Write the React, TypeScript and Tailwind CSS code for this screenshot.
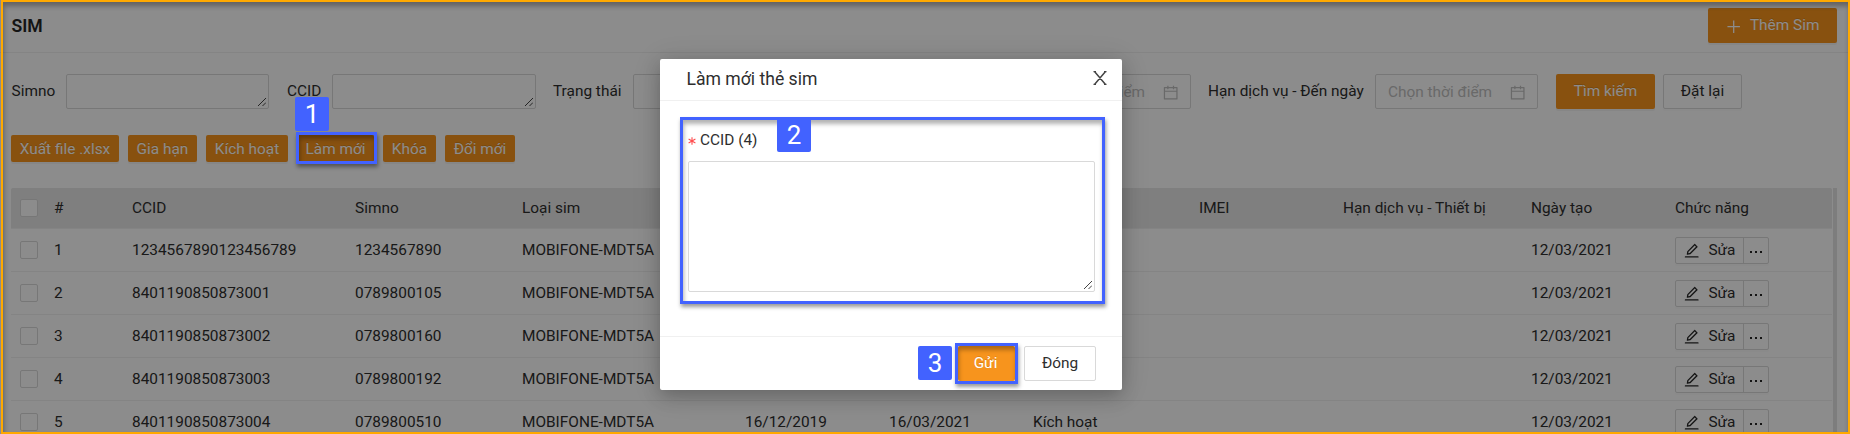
import React from "react";

const text = "whitespace-nowrap text-[15.4px] leading-[24.2px] text-[#2e2e2e]";

function Grip() {
  return (
    <svg className="absolute right-[2px] bottom-[2px] h-[8px] w-[8px]" viewBox="0 0 8 8" fill="none" stroke="#444" strokeWidth="1">
      <path d="M0 8 8 0M4.500 8 8 4.500" />
    </svg>
  );
}

function CalendarIcon() {
  return (
    <svg className="mt-[2px] h-[15.4px] w-[15.4px]" viewBox="64 64 896 896" fill="#bfbfbf">
      <path d="M880 184H712v-64c0-4.400-3.600-8-8-8h-56c-4.400 0-8 3.600-8 8v64H384v-64c0-4.400-3.600-8-8-8h-56c-4.400 0-8 3.600-8 8v64H144c-17.700 0-32 14.300-32 32v664c0 17.700 14.300 32 32 32h736c17.700 0 32-14.300 32-32V216c0-17.700-14.300-32-32-32zm-40 656H184V460h656v380zM184 392V256h128v48c0 4.400 3.600 8 8 8h56c4.400 0 8-3.600 8-8v-48h256v48c0 4.400 3.600 8 8 8h56c4.400 0 8-3.600 8-8v-48h128v136H184z" />
    </svg>
  );
}

function EditIcon() {
  return (
    <svg className="mt-[2px] h-[15.4px] w-[15.4px] shrink-0" viewBox="64 64 896 896" fill="#262626">
      <path d="M257.700 752c2 0 4-.2 6-.5L431.900 722c2-.4 3.900-1.300 5.300-2.800l423.900-423.900a9.960 9.960 0 0 0 0-14.100L694.900 114.900c-1.900-1.900-4.400-2.900-7.100-2.900s-5.200 1-7.100 2.900L256.800 538.800c-1.500 1.500-2.400 3.300-2.800 5.300l-29.500 168.200a33.500 33.500 0 0 0 9.400 29.800c6.600 6.400 14.900 9.900 23.800 9.900zm67.400-174.400L687.800 215l73.300 73.300-362.700 362.600-88.900 15.700 15.600-89zM880 836H144c-17.700 0-32 14.300-32 32v36c0 4.400 3.600 8 8 8h784c4.400 0 8-3.600 8-8v-36c0-17.700-14.300-32-32-32z" />
    </svg>
  );
}

function PrimaryButton({ className, children }: { className: string; children: React.ReactNode }) {
  return (
    <button
      className={
        "flex shrink-0 items-center justify-center rounded-[2px] bg-[#f7941d] text-[15.4px] leading-[24px] whitespace-nowrap text-white shadow-[0_2px_0_rgba(0,0,0,0.045)] [text-shadow:0_-1px_0_rgba(0,0,0,0.12)] " +
        className
      }
    >
      {children}
    </button>
  );
}

function DateInput({ className }: { className: string }) {
  return (
    <div className={"flex h-[35px] shrink-0 items-center justify-between rounded-[2px] border border-[#d9d9d9] px-3 " + className}>
      <span className="text-[15.4px] leading-[24px] whitespace-nowrap text-[#bfbfbf]">Chọn thời điểm</span>
      <CalendarIcon />
    </div>
  );
}

function Header() {
  return (
    <header className="flex h-[53px] shrink-0 items-start justify-between border-b border-[#f0f0f0] pt-2 pr-[13px] pl-[11.500px]">
      <h1 className="mt-[4px] text-[17.6px] leading-[28px] font-semibold text-[#262626]">SIM</h1>
      <PrimaryButton className="h-[35px] w-[129px] gap-[9px] pb-[1px]">
        <svg className="mt-[3px] h-[15.4px] w-[15.4px]" viewBox="0 0 16 16" stroke="white" strokeWidth="1.300">
          <path d="M8 1.500v13M1.500 8h13" />
        </svg>
        Thêm Sim
      </PrimaryButton>
    </header>
  );
}

function Filters() {
  return (
    <div className="mt-[21px] flex h-[35px] shrink-0 items-center pl-[11.500px]">
      <span className={text + " w-[54.500px]"}>Simno</span>
      <div className="relative h-[35px] w-[203px] rounded-[2px] border border-[#d9d9d9]"><Grip /></div>
      <span className={text + " ml-[18px] w-[45px]"}>CCID</span>
      <div className="relative h-[35px] w-[204px] rounded-[2px] border border-[#d9d9d9]"><Grip /></div>
      <span className={text + " ml-[17px] w-[80px]"}>Trạng thái</span>
      <div className="h-[35px] w-[170px] rounded-[2px] border border-[#d9d9d9]" />
      <DateInput className="ml-[225px] w-[163px]" />
      <span className={text + " ml-[17px] w-[167px]"}>Hạn dịch vụ - Đến ngày</span>
      <DateInput className="w-[163px]" />
      <PrimaryButton className="ml-[18px] h-[35px] w-[99px] pb-[1px]">Tìm kiếm</PrimaryButton>
      <button className={text + " ml-[8px] h-[35px] w-[79px] rounded-[2px] border border-[#d9d9d9] shadow-[0_2px_0_rgba(0,0,0,0.016)]"}>Đặt lại</button>
    </div>
  );
}

function Actions() {
  return (
    <div className="mt-[26px] flex h-[27px] shrink-0 gap-[9px] pl-[11px]">
      <PrimaryButton className="w-[108px]">Xuất file .xlsx</PrimaryButton>
      <PrimaryButton className="w-[69px]">Gia hạn</PrimaryButton>
      <PrimaryButton className="w-[82px]">Kích hoạt</PrimaryButton>
      <PrimaryButton className="w-[77px]">Làm mới</PrimaryButton>
      <PrimaryButton className="w-[53px]">Khóa</PrimaryButton>
      <PrimaryButton className="w-[70px]">Đổi mới</PrimaryButton>
    </div>
  );
}

const cols = "grid grid-cols-[43px_78px_223px_167px_223px_144px_144px_166px_144px_188px_144px_157px]";

const rows = [
  ["1", "1234567890123456789", "1234567890", "", "", ""],
  ["2", "8401190850873001", "0789800105", "", "", ""],
  ["3", "8401190850873002", "0789800160", "", "", ""],
  ["4", "8401190850873003", "0789800192", "", "", ""],
  ["5", "8401190850873004", "0789800510", "16/12/2019", "16/03/2021", "Kích hoạt"],
];

function Checkbox() {
  return <span className="ml-[9px] block h-[18px] w-[18px] rounded-[2px] border border-[#d9d9d9] bg-white" />;
}

function Table() {
  return (
    <div className="mt-[26px] ml-[11px] flex h-[260px] shrink-0">
      <div className="w-[1821px]">
        <div className={cols + " " + text + " h-[41px] items-center rounded-t-[2px] border-b border-[#f0f0f0] bg-[#e7e7e7]"}>
          <Checkbox />
          <span>#</span>
          <span>CCID</span>
          <span>Simno</span>
          <span>Loại sim</span>
          <span />
          <span />
          <span />
          <span>IMEI</span>
          <span>Hạn dịch vụ - Thiết bị</span>
          <span>Ngày tạo</span>
          <span>Chức năng</span>
        </div>
        {rows.map(([n, ccid, simno, activated, expires, status]) => (
          <div key={n} className={cols + " " + text + " h-[43px] items-center border-b border-[#f0f0f0]"}>
            <Checkbox />
            <span>{n}</span>
            <span>{ccid}</span>
            <span>{simno}</span>
            <span>MOBIFONE-MDT5A</span>
            <span>{activated}</span>
            <span>{expires}</span>
            <span>{status}</span>
            <span />
            <span />
            <span>12/03/2021</span>
            <div className="flex h-[27px] w-[94px] rounded-[2px] border border-[#d9d9d9] shadow-[0_2px_0_rgba(0,0,0,0.016)]">
              <div className="flex w-[68px] items-center gap-[9px] border-r border-[#d9d9d9] pl-[8px]">
                <EditIcon />
                <span>Sửa</span>
              </div>
              <div className="flex flex-1 items-center justify-center gap-[3px] pt-[3px]">
                <i className="h-[2px] w-[2px] bg-[#262626]" />
                <i className="h-[2px] w-[2px] bg-[#262626]" />
                <i className="h-[2px] w-[2px] bg-[#262626]" />
              </div>
            </div>
          </div>
        ))}
      </div>
      <div className="ml-[1px] w-[4px] bg-[#e4e4e4]" />
    </div>
  );
}

const badge = "absolute flex items-center justify-center rounded-[2px] bg-[#4262ff] text-[26px] leading-none text-white";
const outline = "absolute border-[3px] border-[#4262ff] shadow-[1px_3px_4px_rgba(0,0,0,0.4),inset_1px_4px_4px_rgba(0,0,0,0.3)]";

function Modal() {
  return (
    <div className="absolute top-[59px] left-[660px] flex h-[331px] w-[462px] flex-col rounded-[2px] bg-white shadow-[0_6px_18px_rgba(0,0,0,0.2),0_3px_30px_rgba(0,0,0,0.12)]">
      <div className="flex h-[42px] shrink-0 items-center justify-between border-b border-[#f0f0f0] pr-[15px] pb-[2px] pl-[26.500px]">
        <span className="text-[17.6px] leading-[24px] text-[#2e2e2e]">Làm mới thẻ sim</span>
        <svg className="-mt-[2px] h-[14px] w-[14px]" viewBox="0 0 14 14" fill="none" stroke="#444" strokeWidth="1.500">
          <path d="M1.500 0.500 12.500 13.500M12.500 0.500 1.500 13.500M0.500 0.500h2.500M11 0.500h2.500M0.500 13.500h2.500M11 13.500h2.500" />
        </svg>
      </div>
      <div className="flex-1 pt-[27px] pl-[28px]">
        <div className="flex items-center gap-[4px]">
          <svg className="mt-[2px] h-[8px] w-[8px]" viewBox="0 0 8 8" stroke="#ff4d4f" strokeWidth="1.100">
            <path d="M4 0.200v7.600M0.600 2 7.400 6M7.400 2 0.600 6" />
          </svg>
          <span className={text}>CCID (4)</span>
        </div>
        <div className="relative mt-[9px] h-[131px] w-[407px] rounded-[2px] border border-[#d9d9d9]"><Grip /></div>
      </div>
      <div className="flex h-[54px] shrink-0 justify-end gap-[9px] border-t border-[#f0f0f0] pt-[9px] pr-[26px]">
        <PrimaryButton className="h-[35px] w-[57px] pr-[2px] pb-[1px]">Gửi</PrimaryButton>
        <button className={text + " h-[35px] w-[72px] rounded-[2px] border border-[#d9d9d9]"}>Đóng</button>
      </div>
    </div>
  );
}

export default function App() {
  return (
    <div className="relative h-[434px] w-[1850px] overflow-hidden bg-white font-[Roboto,'Liberation_Sans',sans-serif]">
      <div className="flex h-full flex-col">
        <Header />
        <Filters />
        <Actions />
        <Table />
      </div>
      <div className="absolute inset-0 bg-black/45" />
      <Modal />
      <div className="absolute top-0 right-0 bottom-0 left-[1px] border-2 border-[#ffa900] shadow-[inset_1px_4px_5px_rgba(0,0,0,0.3)]" />
      <div className={outline + " top-[132px] left-[296px] h-[32px] w-[81px]"} />
      <div className={outline + " top-[117px] left-[680px] h-[187px] w-[425px]"} />
      <div className={outline + " top-[343px] left-[955px] h-[41px] w-[63px]"} />
      <div className={badge + " top-[97px] left-[295px] h-[34px] w-[34px]"}>1</div>
      <div className={badge + " top-[118px] left-[777px] h-[34px] w-[34px]"}>2</div>
      <div className={badge + " top-[346px] left-[918px] h-[34px] w-[34px]"}>3</div>
    </div>
  );
}
